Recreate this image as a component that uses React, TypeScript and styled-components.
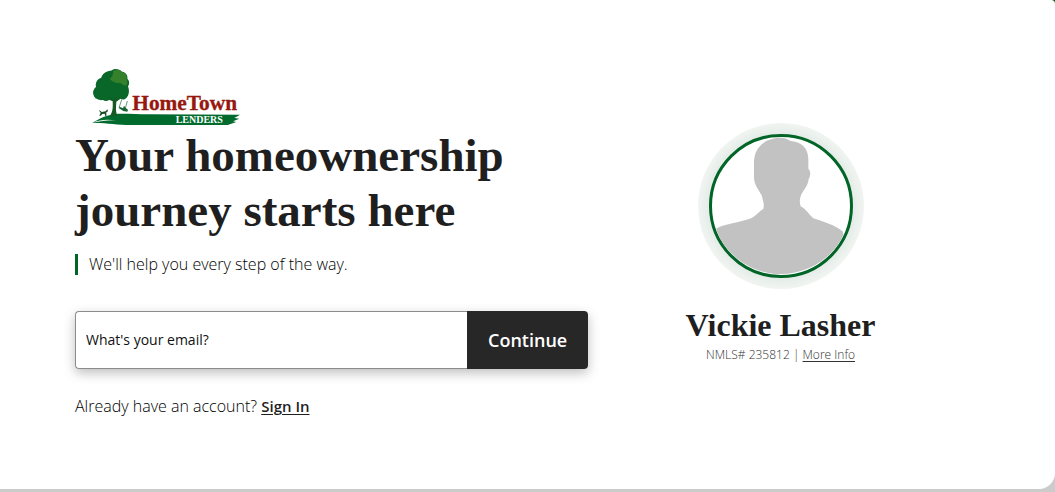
import React from "react";
import styled, { createGlobalStyle } from "styled-components";

const sans = `"Open Sans", "Noto Sans", sans-serif`;
const serif = `"Source Serif Pro", "Liberation Serif", serif`;

const GlobalStyle = createGlobalStyle`
  *, *::before, *::after { box-sizing: border-box; }
  body {
    margin: 0;
    background: #cbcbcb linear-gradient(#006526, #006526) top / 100% 8px no-repeat;
    color: #1f1f1f;
    font-family: ${sans};
  }
`;

const Card = styled.main`
  display: grid;
  grid-template-columns: 4fr 3fr;
  margin-bottom: 3px;
  padding: 68px 82px 72px 75px;
  background: #fff;
  border-radius: 0 4px 16px 0;
`;

const Intro = styled.section`
  display: flex;
  flex-direction: column;
  align-items: flex-start;
`;

const Logo = styled.svg`
  display: block;
  width: 149px;
  height: 58px;
  margin-left: 16px;
`;

const Title = styled.h1`
  margin: 2px 0 16px;
  font: 700 47px/55px ${serif};
`;

const Tagline = styled.p`
  margin: 0 0 36px;
  padding-left: 11px;
  border-left: 3px solid #006526;
  color: #000;
  font-size: 16px;
  font-weight: 300;
  line-height: 21px;
`;

const EmailForm = styled.form`
  display: flex;
  align-self: stretch;
  height: 58px;
  margin-bottom: 26px;
  border-radius: 4px;
  box-shadow: 0 4px 12px rgba(0, 0, 0, 0.26);
`;

const EmailInput = styled.input`
  flex: 1;
  min-width: 0;
  padding: 0 10px 2px;
  border: 1px solid #8c8c8c;
  border-right: 0;
  border-radius: 4px 0 0 4px;
  background: #fff;
  font: 500 14px ${sans};
  color: #111;
  &::placeholder { color: #111; opacity: 1; }
`;

const ContinueButton = styled.button`
  width: 121px;
  padding: 0;
  border: 0;
  border-radius: 0 4px 4px 0;
  background: #272727;
  color: #fff;
  font: 600 18px ${sans};
`;

const Account = styled.p`
  margin: 0;
  color: #000;
  font-size: 16px;
  font-weight: 300;
  line-height: 22px;
`;

const SignIn = styled.a`
  color: #1f1f1f;
  font-size: 15px;
  font-weight: 600;
  text-underline-offset: 2px;
`;

const Officer = styled.section`
  display: flex;
  flex-direction: column;
  align-items: center;
  padding-top: 55px;
`;

const Halo = styled.div`
  padding: 11px;
  border-radius: 50%;
  background: radial-gradient(circle closest-side, #e2eae6 84%, #f1f5f2 100%);
`;

const Portrait = styled.svg`
  display: block;
  width: 144px;
  height: 144px;
  border: 3px solid #006526;
  border-radius: 50%;
  background: #fff;
`;

const Name = styled.h2`
  margin: 18px 0 4px;
  font: 700 32px/36px ${serif};
`;

const License = styled.p`
  margin: 0;
  color: #333;
  font-size: 12px;
  font-weight: 300;
  line-height: 16px;
`;

const MoreInfo = styled.a`
  color: inherit;
  text-underline-offset: 2px;
`;

function HomeTownLogo() {
  return (
    <Logo viewBox="18 24 447 174" role="img" aria-label="HomeTown Lenders">
      <path fill="#006b2d" d="M22 189C45 174 65 166 92 162c24-2 61 1 99 1l274 1-17 10 15 2-19 8 10 2-26 9H138c-42 0-74-7-116-6Z" />
      <path fill="#fff" d="M24 188c22-10 43-10 70-7-26-1-48 2-70 7Z" />
      <path fill="#086729" d="M76 118c-8 7-17 6-22 2-10 2-26-3-28-14-5-12 2-21 7-25-3-15 5-25 16-28 3-14 18-21 29-21 10-8 24-6 33 3 11 2 18 10 16 21 8 8 6 17 2 23 5 13 3 27-4 34-8 8-15 5-20 3-8 6-19 7-29 2Z" />
      <path fill="#34802b" d="M84 34c11-8 23-4 28 3 9 2 16 10 12 18 3 8 5 14 1 21-8 1-14-3-20-8-11 3-23-3-31-12 8-5 11-12 10-22Z" />
      <path fill="#155a25" d="m75 111-3 8 11 5c1 20 0 31-8 44h25c-9-7-7-24-6-43l12-9-2-5-10 8-3-7-4 8Z" />
      <path fill="#174d22" d="m43 150 7 6 12-2 5-6 2 6-5 3v11h-3l-2-7-7 1-5 5h-4l4-9-4-5Z" />
      <path fill="none" stroke="#176332" strokeWidth="2" d="m110 119-7 22 17 8 7-26" />
      <path fill="#176332" d="m101 141 13 4 3-8 5 7 7 5-2 6-12-2-13-8Z" />
      <text x="142" y="149" fill="#97180f" stroke="#97180f" strokeWidth="1" fontFamily="Liberation Serif, serif" fontSize="64" fontWeight="700">HomeTown</text>
      <text x="272" y="188" fill="#fff" fontFamily="Liberation Serif, serif" fontSize="30" fontWeight="700">LENDERS</text>
    </Logo>
  );
}

function OfficerPortrait() {
  return (
    <Portrait viewBox="66 66 414 414" role="img" aria-label="Vickie Lasher">
      <path
        fill="#c2c2c2"
        d="M272 68c13 0 22 4 29 10 32 2 54 20 54 55v28c7 7 8 20 1 31-2 23-19 36-24 52-4 11-3 21 0 30 17 9 23 23 38 36 29 10 66 20 89 40l1 11c-31 66-104 116-187 116-87 0-157-51-194-125v-11c22-13 59-17 96-28 24-8 28-22 45-31 4-15-2-27-5-41-8-14-22-31-23-51v-48c0-46 35-74 80-74Z"
      />
    </Portrait>
  );
}

export default function App() {
  return (
    <>
      <GlobalStyle />
      <Card>
        <Intro>
          <HomeTownLogo />
          <Title>
            Your homeownership
            <br />
            journey starts here
          </Title>
          <Tagline>We'll help you every step of the way.</Tagline>
          <EmailForm onSubmit={(event) => event.preventDefault()}>
            <EmailInput type="email" aria-label="What's your email?" placeholder="What's your email?" />
            <ContinueButton type="submit">Continue</ContinueButton>
          </EmailForm>
          <Account>
            Already have an account? <SignIn href="#sign-in">Sign In</SignIn>
          </Account>
        </Intro>
        <Officer>
          <Halo>
            <OfficerPortrait />
          </Halo>
          <Name>Vickie Lasher</Name>
          <License>
            NMLS# 235812 | <MoreInfo href="#more-info">More Info</MoreInfo>
          </License>
        </Officer>
      </Card>
    </>
  );
}
